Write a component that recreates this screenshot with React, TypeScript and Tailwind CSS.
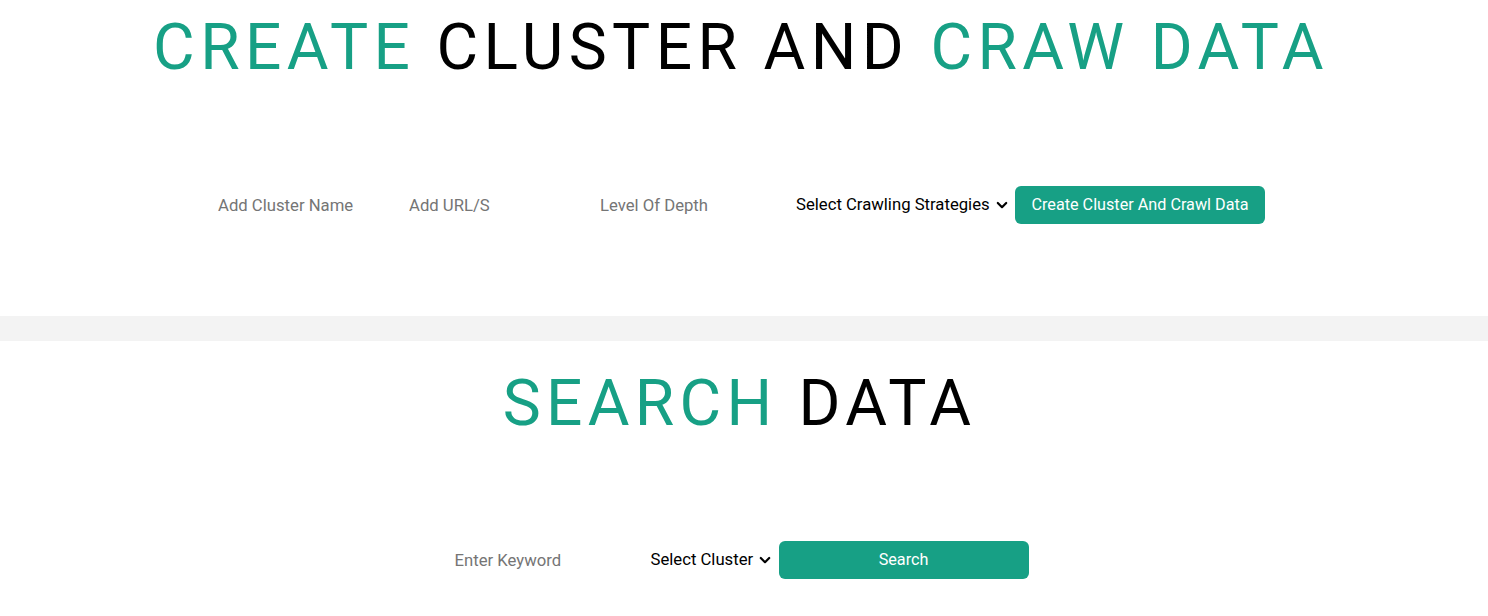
import React from "react";

const Chevron = () => (
  <svg width="12" height="12" viewBox="0 0 12 12" className="ml-[6px] mt-[1px]" aria-hidden>
    <path d="M1.8 4 L6 8.2 L10.2 4" fill="none" stroke="#000" strokeWidth="2.2" strokeLinecap="round" strokeLinejoin="round" />
  </svg>
);

const inputCls =
  "h-[38px] bg-transparent text-[16.7px] outline-none caret-black placeholder:text-[#757575]";

export default function App() {
  return (
    <div className="min-h-[616px] bg-white font-['Roboto',sans-serif] text-black">
      <section className="pt-[16px]">
        <h1 className="text-center text-[64px] leading-[64px] font-normal tracking-[5.4px] pr-[6px]">
          <span className="text-[#17a085]">CREATE</span> CLUSTER AND <span className="text-[#17a085]">CRAW DATA</span>
        </h1>
        <div className="mt-[106px] flex items-center justify-center pr-[5px]">
          <input autoFocus placeholder="Add Cluster Name" className={`w-[191px] ${inputCls}`} />
          <input placeholder="Add URL/S" className={`w-[191px] ${inputCls}`} />
          <input placeholder="Level Of Depth" className={`w-[196px] ${inputCls}`} />
          <div className="w-[212px] flex items-center text-[16.7px]">
            <span>Select Crawling Strategies</span>
            <Chevron />
          </div>
          <button className="ml-[7px] w-[250px] h-[38px] pt-[1px] rounded-[6px] bg-[#17a085] text-white text-[16.2px]">
            Create Cluster And Crawl Data
          </button>
        </div>
      </section>
      <div className="mt-[92px] h-[25px] bg-[#f3f3f3]" />
      <section className="pt-[31px]">
        <h2 className="text-center text-[64px] leading-[64px] font-normal tracking-[5.3px] pr-[9px]">
          <span className="text-[#17a085]">SEARCH</span> DATA
        </h2>
        <div className="mt-[105px] flex items-center justify-center pr-[5px]">
          <input placeholder="Enter Keyword" className={`w-[196px] ${inputCls}`} />
          <div className="w-[128px] flex items-center text-[16.7px]">
            <span>Select Cluster</span>
            <Chevron />
          </div>
          <button className="w-[250px] h-[38px] pt-[1px] rounded-[6px] bg-[#17a085] text-white text-[16.2px]">
            Search
          </button>
        </div>
      </section>
    </div>
  );
}
